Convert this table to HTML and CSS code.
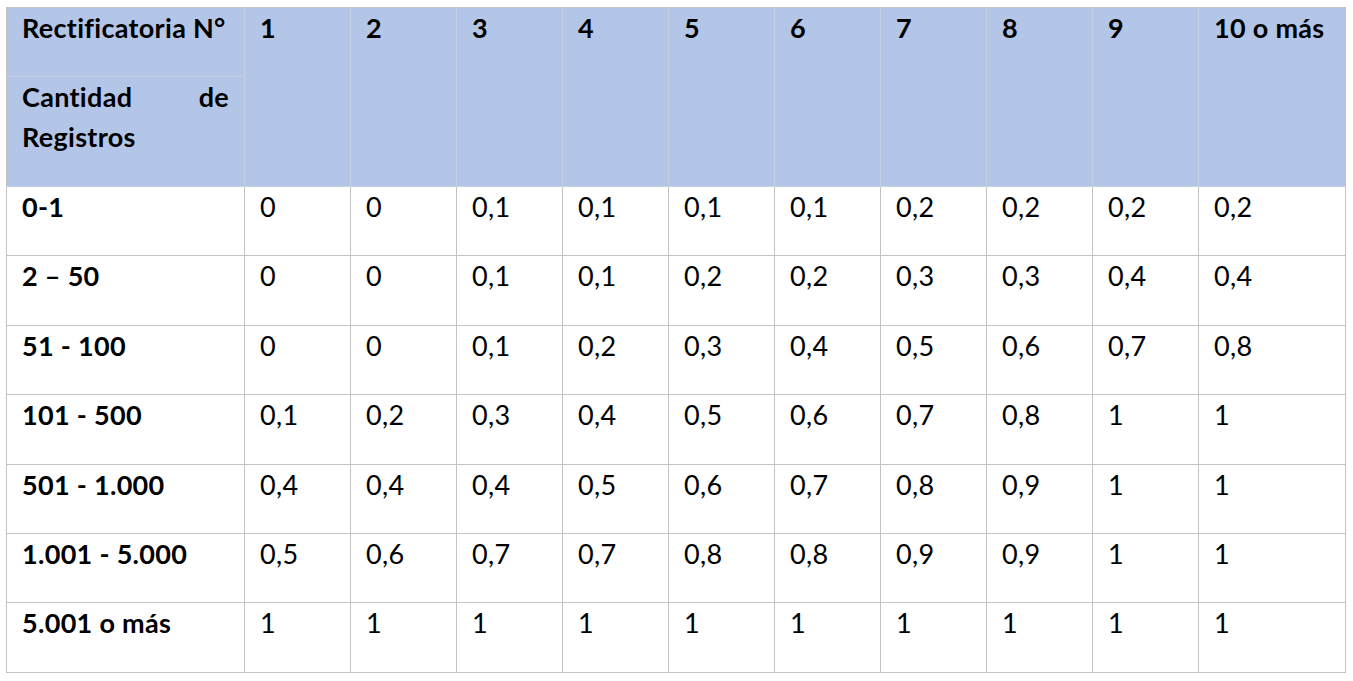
FILE: index.html
```html
<!DOCTYPE html>
<html lang="es">
<head>
<meta charset="utf-8">
<title>Rectificatoria</title>
<link rel="stylesheet" href="styles.css">
</head>
<body>
<div class="page">
<table class="grid">
  <colgroup>
    <col class="c-first">
    <col class="c-num"><col class="c-num"><col class="c-num"><col class="c-num"><col class="c-num">
    <col class="c-num"><col class="c-num"><col class="c-num"><col class="c-num">
    <col class="c-last">
  </colgroup>
  <thead>
    <tr class="h1">
      <th>Rectificatoria N°</th>
      <th rowspan="2">1</th><th rowspan="2">2</th><th rowspan="2">3</th><th rowspan="2">4</th><th rowspan="2">5</th>
      <th rowspan="2">6</th><th rowspan="2">7</th><th rowspan="2">8</th><th rowspan="2">9</th><th rowspan="2">10 o más</th>
    </tr>
    <tr class="h2">
      <th class="just">Cantidad de Registros</th>
    </tr>
  </thead>
  <tbody>
    <tr><th>0-1</th><td>0</td><td>0</td><td>0,1</td><td>0,1</td><td>0,1</td><td>0,1</td><td>0,2</td><td>0,2</td><td>0,2</td><td>0,2</td></tr>
    <tr><th>2 – 50</th><td>0</td><td>0</td><td>0,1</td><td>0,1</td><td>0,2</td><td>0,2</td><td>0,3</td><td>0,3</td><td>0,4</td><td>0,4</td></tr>
    <tr><th>51 - 100</th><td>0</td><td>0</td><td>0,1</td><td>0,2</td><td>0,3</td><td>0,4</td><td>0,5</td><td>0,6</td><td>0,7</td><td>0,8</td></tr>
    <tr><th>101 - 500</th><td>0,1</td><td>0,2</td><td>0,3</td><td>0,4</td><td>0,5</td><td>0,6</td><td>0,7</td><td>0,8</td><td>1</td><td>1</td></tr>
    <tr><th>501 - 1.000</th><td>0,4</td><td>0,4</td><td>0,4</td><td>0,5</td><td>0,6</td><td>0,7</td><td>0,8</td><td>0,9</td><td>1</td><td>1</td></tr>
    <tr><th>1.001 - 5.000</th><td>0,5</td><td>0,6</td><td>0,7</td><td>0,7</td><td>0,8</td><td>0,8</td><td>0,9</td><td>0,9</td><td>1</td><td>1</td></tr>
    <tr><th>5.001 o más</th><td>1</td><td>1</td><td>1</td><td>1</td><td>1</td><td>1</td><td>1</td><td>1</td><td>1</td><td>1</td></tr>
  </tbody>
</table>
</div>
</body>
</html>
```

FILE: styles.css
```css
html, body {
  margin: 0;
  padding: 0;
  background: #ffffff;
}

.page {
  padding: 7px 0 0 6px;
}

.grid {
  border-collapse: collapse;
  table-layout: fixed;
  width: 1339px;
  font-family: Lato, "Liberation Sans", sans-serif;
  font-size: 27px;
  line-height: 40px;
  letter-spacing: 0.3px;
  color: #000000;
}

.c-first { width: 238px; }
.c-num { width: 106px; }
.c-last { width: 147px; }

.grid th,
.grid td {
  border: 1px solid #c3c3c3;
  padding: 0 15px 0 15px;
  vertical-align: top;
  text-align: left;
}

.grid th {
  font-weight: 700;
}

.grid td {
  font-weight: 400;
}

.grid thead th {
  background: #b4c6e7;
  border-color: #c5cfe0;
}

.grid thead tr:first-child th {
  border-top-color: #c3c3c3;
}

.grid thead th:first-child {
  border-left-color: #c3c3c3;
}

.grid thead th:last-child {
  border-right-color: #c3c3c3;
}

.h1 { height: 69px; }
.h2 { height: 110px; }
.grid tbody tr { height: 69.4px; }

.grid th.just {
  text-align: justify;
}
```
